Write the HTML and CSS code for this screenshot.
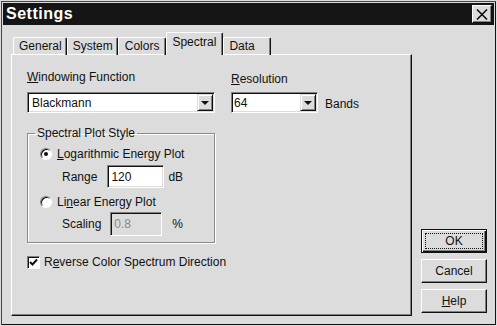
FILE: index.html
```html
<!DOCTYPE html>
<html lang="en">
<head>
    <meta charset="UTF-8">
    <title>Settings</title>
    <link rel="stylesheet" href="styles.css">
</head>
<body>
    <div class="window">
        <!-- Title bar -->
        <div class="titlebar">
            <span class="title">Settings</span>
            <button class="close-btn" aria-label="Close">
                <svg width="12" height="11" viewBox="0 0 12 11">
                    <path d="M1 0.5 L11 10.5 M11 0.5 L1 10.5" stroke="#111" stroke-width="1.6" fill="none"/>
                </svg>
            </button>
        </div>

        <div class="dialog-body">
            <div class="tabs-area">
                <div class="tab-strip">
                    <div class="tab">General</div>
                    <div class="tab">System</div>
                    <div class="tab tab-colors">Colors</div>
                    <div class="tab active">Spectral</div>
                    <div class="tab tab-data">Data</div>
                </div>

                <div class="tab-panel">
                    <div class="field-row">
                        <div class="field field-window">
                            <label class="field-label"><u>W</u>indowing Function</label>
                            <div class="combo">
                                <span class="combo-value">Blackmann</span>
                                <span class="combo-btn"><span class="arrow"></span></span>
                            </div>
                        </div>
                        <div class="field">
                            <label class="field-label label-res"><u>R</u>esolution</label>
                            <div class="combo-line">
                                <div class="combo combo-narrow">
                                    <span class="combo-value">64</span>
                                    <span class="combo-btn"><span class="arrow"></span></span>
                                </div>
                                <span class="unit-bands">Bands</span>
                            </div>
                        </div>
                    </div>

                    <fieldset class="group">
                        <legend>Spectral Plot Style</legend>

                        <div class="radio-row">
                            <span class="radio checked"></span>
                            <span><u>L</u>ogarithmic Energy Plot</span>
                        </div>
                        <div class="sub-row sub-range">
                            <span>Range</span>
                            <span class="input-box input-range">120</span>
                            <span class="unit-db">dB</span>
                        </div>

                        <div class="radio-row radio-second">
                            <span class="radio"></span>
                            <span>Li<u>n</u>ear Energy Plot</span>
                        </div>
                        <div class="sub-row sub-scaling">
                            <span>Scaling</span>
                            <span class="input-box input-scaling disabled">0.8</span>
                            <span class="unit-pct">%</span>
                        </div>
                    </fieldset>

                    <div class="check-row">
                        <span class="checkbox">
                            <svg width="9" height="9" viewBox="0 0 9 9">
                                <path d="M1 4 L3.5 6.5 L8 1.5" stroke="#111" stroke-width="2" fill="none"/>
                            </svg>
                        </span>
                        <span>R<u>e</u>verse Color Spectrum Direction</span>
                    </div>
                </div>
            </div>

            <div class="button-col">
                <button class="btn btn-default"><span class="focus-ring">OK</span></button>
                <button class="btn">Cancel</button>
                <button class="btn"><u>H</u>elp</button>
            </div>
        </div>
    </div>
</body>
</html>
```

FILE: styles.css
```css
/* Basic reset */
body {
    margin: 0;
    background-color: #dcdcdc;
    font-family: "Liberation Sans", Arial, sans-serif;
    font-size: 12px;
    color: #111;
}

/* Dialog window frame */
.window {
    width: 497px;
    height: 326px;
    box-sizing: border-box;
    border: 1px solid #dcdcdc;
    box-shadow: inset 1px 1px 0 #444, inset -1px -1px 0 #111;
    padding: 2px;
    display: flex;
    flex-direction: column;
}

/* Title bar */
.titlebar {
    height: 22px;
    background-color: #151515;
    display: flex;
    align-items: center;
    justify-content: space-between;
    padding-left: 3px;
}

.title {
    color: #fff;
    font-weight: bold;
    font-size: 16px;
    letter-spacing: 0.5px;
}

.close-btn {
    width: 20px;
    height: 18px;
    margin-right: 2px;
    padding: 0;
    background-color: #dcdcdc;
    border: 1px solid;
    border-color: #fff #111 #111 #fff;
    box-shadow: inset -1px -1px 0 #808080;
    display: flex;
    align-items: center;
    justify-content: center;
}

/* Body below the title */
.dialog-body {
    flex: 1;
    display: flex;
    padding: 8px 7px 7px 8px;
}

.tabs-area {
    width: 401px;
    display: flex;
    flex-direction: column;
}

/* Tabs */
.tab-strip {
    display: flex;
    align-items: flex-end;
    height: 22px;
    padding-left: 2px;
    margin-bottom: -1px;
    position: relative;
    z-index: 1;
}

.tab {
    height: 18px;
    box-sizing: border-box;
    padding: 0 4px 0 5px;
    line-height: 17px;
    border-top: 1px solid #fff;
    border-left: 1px solid #fff;
    border-right: 1px solid #111;
    border-radius: 2px 2px 0 0;
    box-shadow: inset -1px 0 0 #808080;
}

.tab-colors {
    padding: 0 6px 0 6px;
}

.tab.active {
    height: 23px;
    padding: 0 6px 0 5px;
    line-height: 18px;
    background-color: #dcdcdc;
}

.tab-data {
    min-width: 48px;
}

/* Tab page */
.tab-panel {
    flex: 1;
    border-top: 1px solid #fff;
    border-left: 1px solid #fff;
    border-right: 1px solid #111;
    border-bottom: 1px solid #111;
    box-shadow: inset -1px -1px 0 #808080;
    padding: 15px 16px 0 15px;
}

.field-row {
    display: flex;
    gap: 16px;
}

.field-window {
    width: 188px;
}

.field-label {
    display: block;
    line-height: 14px;
    margin-bottom: 8px;
}

.label-res {
    margin-top: 2px;
    margin-bottom: 6px;
}

/* Combo boxes */
.combo {
    height: 21px;
    box-sizing: border-box;
    display: flex;
    align-items: center;
    background-color: #fff;
    border: 1px solid;
    border-color: #808080 #fff #fff #808080;
    box-shadow: inset 1px 1px 0 #111, inset -1px -1px 0 #dcdcdc;
    padding: 1px 1px 1px 4px;
}

.combo-narrow {
    width: 87px;
    padding-left: 2px;
}

.combo-line {
    display: flex;
    align-items: center;
}

.unit-bands {
    margin-left: 7px;
    margin-top: 2px;
}

.combo-btn {
    margin-left: auto;
    width: 16px;
    height: 17px;
    box-sizing: border-box;
    background-color: #dcdcdc;
    border: 1px solid;
    border-color: #dcdcdc #111 #111 #dcdcdc;
    box-shadow: inset 1px 1px 0 #fff, inset -1px -1px 0 #808080;
    display: flex;
    align-items: center;
    justify-content: center;
}

.arrow {
    width: 0;
    height: 0;
    border-left: 4px solid transparent;
    border-right: 4px solid transparent;
    border-top: 4px solid #111;
    margin-top: 1px;
}

/* Group box */
.group {
    width: 188px;
    box-sizing: border-box;
    margin: 13px 0 0 0;
    padding: 7px 0 6px 12px;
    border: 1px solid #8a8a8a;
    box-shadow: 1px 1px 0 #fff, inset 1px 1px 0 #fff;
}

.group legend {
    padding: 0 2px;
    margin-left: -5px;
    line-height: 14px;
}

.radio-row {
    display: flex;
    align-items: center;
    gap: 5px;
    height: 14px;
}

.radio-second {
    margin-top: 7px;
}

.radio {
    width: 12px;
    height: 12px;
    box-sizing: border-box;
    border-radius: 50%;
    background-color: #fff;
    border: 1px solid;
    border-color: #808080 #fff #fff #808080;
    box-shadow: inset 1px 1px 0 #111;
    display: flex;
    align-items: center;
    justify-content: center;
}

.radio.checked::after {
    content: "";
    width: 4px;
    height: 4px;
    border-radius: 50%;
    background-color: #111;
}

.sub-row {
    display: flex;
    align-items: center;
    padding-left: 22px;
}

.sub-range {
    margin-top: 4px;
}

.sub-scaling {
    margin-top: 3px;
}

.input-box {
    height: 23px;
    box-sizing: border-box;
    display: flex;
    align-items: center;
    background-color: #fff;
    border: 1px solid;
    border-color: #808080 #fff #fff #808080;
    box-shadow: inset 1px 1px 0 #111, inset -1px -1px 0 #dcdcdc;
    padding-left: 3px;
}

.input-range {
    width: 57px;
    margin-left: 10px;
}

.input-scaling {
    width: 52px;
    margin-left: 9px;
    height: 24px;
}

.input-box.disabled {
    background-color: #dcdcdc;
    color: #8a8a8a;
}

.unit-db {
    margin-left: 4px;
}

.unit-pct {
    margin-left: 10px;
}

/* Checkbox */
.check-row {
    display: flex;
    align-items: center;
    gap: 4px;
    margin-top: 12px;
}

.checkbox {
    width: 13px;
    height: 13px;
    box-sizing: border-box;
    background-color: #fff;
    border: 1px solid;
    border-color: #808080 #fff #fff #808080;
    box-shadow: inset 1px 1px 0 #111;
    display: flex;
    align-items: center;
    justify-content: center;
}

/* Push buttons */
.button-col {
    width: 66px;
    margin-left: 9px;
    display: flex;
    flex-direction: column;
    justify-content: flex-end;
    gap: 6px;
    padding-bottom: 3px;
}

.btn {
    height: 24px;
    padding: 0;
    font-family: "Liberation Sans", Arial, sans-serif;
    font-size: 12px;
    color: #111;
    background-color: #dcdcdc;
    border: 1px solid;
    border-color: #fff #111 #111 #fff;
    box-shadow: inset -1px -1px 0 #808080;
}

.btn-default {
    border: 1px solid #111;
    box-shadow: inset 1px 1px 0 #fff, inset -1px -1px 0 #111, inset -2px -2px 0 #808080;
    display: flex;
    padding: 3px;
}

.focus-ring {
    flex: 1;
    border: 1px dotted #111;
    display: flex;
    align-items: center;
    justify-content: center;
}
```
